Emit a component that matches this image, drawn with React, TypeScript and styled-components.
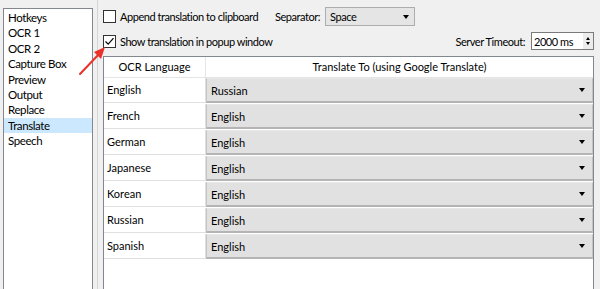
import styled, { createGlobalStyle } from 'styled-components';

const GlobalStyle = createGlobalStyle`
  html, body {
    margin: 0;
    padding: 0;
    background: #f0f0f0;
  }
  body {
    font-family: Lato, 'Noto Sans', sans-serif;
    font-size: 11px;
    color: #000;
  }
`;

const Window = styled.div`
  position: relative;
  display: flex;
  width: 600px;
  height: 289px;
  overflow: hidden;
  background: #f0f0f0;
`;

const SideList = styled.ul`
  list-style: none;
  margin: 8px 0 -20px 3px;
  padding: 1px 0 0;
  width: 88px;
  border: 1px solid #828790;
  background: #fff;
  letter-spacing: -0.4px;
`;

const SideItem = styled.li<{ $active?: boolean }>`
  height: 15.4px;
  line-height: 15.4px;
  padding-left: 4px;
  white-space: nowrap;
  font-size: 11.5px;
  background: ${(p) => (p.$active ? '#cce8ff' : 'transparent')};
`;

const Page = styled.div`
  display: flex;
  flex-direction: column;
  margin-left: 4px;
  padding-left: 5px;
  width: 491px;
  border-left: 1px solid #d4d4d4;
`;

const OptionRow = styled.div<{ $top: number; $height: number }>`
  display: flex;
  align-items: center;
  margin-top: ${(p) => p.$top}px;
  height: ${(p) => p.$height}px;
  letter-spacing: -0.45px;
`;

const CheckLabel = styled.label<{ $width?: number }>`
  display: flex;
  align-items: center;
  gap: 4px;
  white-space: nowrap;
  flex-shrink: 0;
  width: ${(p) => (p.$width ? `${p.$width}px` : 'auto')};
`;

const Box = styled.span`
  display: inline-flex;
  align-items: center;
  justify-content: center;
  flex-shrink: 0;
  width: 11px;
  height: 11px;
  border: 1px solid #333;
  background: #fff;
`;

const FieldLabel = styled.span<{ $push?: boolean }>`
  white-space: nowrap;
  margin-left: ${(p) => (p.$push ? 'auto' : '0')};
`;

const Combo = styled.div<{ $width: number }>`
  display: flex;
  align-items: center;
  justify-content: space-between;
  box-sizing: border-box;
  width: ${(p) => p.$width}px;
  height: 19px;
  margin-left: 5px;
  padding: 0 5px 0 4px;
  border: 1px solid #adadad;
  background: #e5e5e5;
`;

const Arrow = styled.span`
  width: 0;
  height: 0;
  border-left: 3.5px solid transparent;
  border-right: 3.5px solid transparent;
  border-top: 4px solid #000;
`;

const Spin = styled.div`
  display: flex;
  align-items: center;
  box-sizing: border-box;
  width: 63px;
  height: 18px;
  margin-left: 6px;
  padding-left: 2px;
  border: 1px solid #7a7a7a;
  background: #fff;
`;

const SpinText = styled.span`
  flex: 1;
`;

const SpinButtons = styled.div`
  display: flex;
  flex-direction: column;
  align-items: center;
  justify-content: center;
  gap: 2px;
  width: 10px;
  height: 100%;
  background: #ececec;
`;

const SmallTri = styled.span<{ $up?: boolean }>`
  width: 0;
  height: 0;
  border-left: 2.5px solid transparent;
  border-right: 2.5px solid transparent;
  ${(p) => (p.$up ? 'border-bottom: 3px solid #000;' : 'border-top: 3px solid #000;')}
`;

const Table = styled.div`
  margin-top: 6px;
  margin-bottom: -20px;
  flex: 1;
  border: 1px solid #828790;
  background: #fff;
`;

const Grid = styled.div`
  display: grid;
  grid-template-columns: 102px 1fr;
`;

const HeadCell = styled.div<{ $last?: boolean }>`
  height: 20px;
  line-height: 20px;
  text-align: center;
  border-bottom: 1px solid #e5e5e5;
  border-right: ${(p) => (p.$last ? 'none' : '1px solid #e5e5e5')};
`;

const LangCell = styled.div`
  height: 24px;
  line-height: 24px;
  padding-left: 3px;
  border-bottom: 1px solid #e0e0e0;
  border-right: 1px solid #e0e0e0;
`;

const CellCombo = styled.div`
  display: flex;
  align-items: center;
  justify-content: space-between;
  height: 22px;
  margin: 0 0 1px 0;
  padding: 0 7px 0 4px;
  border: 1px solid #c4c4c4;
  border-bottom: 2px solid #b4b4b4;
  border-top: 1px solid #e8e8e8;
  background: #e1e1e1;
`;

const Pointer = styled.svg`
  position: absolute;
  left: 76px;
  top: 44px;
`;

const sections = ['Hotkeys', 'OCR 1', 'OCR 2', 'Capture Box', 'Preview', 'Output', 'Replace', 'Translate', 'Speech'];

const rows: [string, string][] = [
  ['English', 'Russian'],
  ['French', 'English'],
  ['German', 'English'],
  ['Japanese', 'English'],
  ['Korean', 'English'],
  ['Russian', 'English'],
  ['Spanish', 'English'],
];

const Check = () => (
  <svg width="11" height="11" viewBox="0 0 11 11">
    <path d="M1.5 5.5 L4.2 8.2 L9.5 2.2" fill="none" stroke="#000" strokeWidth="1.2" />
  </svg>
);

export default function App() {
  return (
    <Window>
      <GlobalStyle />
      <SideList>
        {sections.map((s) => (
          <SideItem key={s} $active={s === 'Translate'}>
            {s}
          </SideItem>
        ))}
      </SideList>
      <Page>
        <OptionRow $top={7} $height={19}>
          <CheckLabel $width={172}>
            <Box />
            Append translation to clipboard
          </CheckLabel>
          <FieldLabel>Separator:</FieldLabel>
          <Combo $width={90}>
            Space
            <Arrow />
          </Combo>
        </OptionRow>
        <OptionRow $top={6} $height={18}>
          <CheckLabel>
            <Box>
              <Check />
            </Box>
            Show translation in popup window
          </CheckLabel>
          <FieldLabel $push>Server Timeout:</FieldLabel>
          <Spin>
            <SpinText>2000 ms</SpinText>
            <SpinButtons>
              <SmallTri $up />
              <SmallTri />
            </SpinButtons>
          </Spin>
        </OptionRow>
        <Table>
          <Grid>
            <HeadCell>OCR Language</HeadCell>
            <HeadCell $last>Translate To (using Google Translate)</HeadCell>
            {rows.map(([from, to]) => (
              <>
                <LangCell key={from}>{from}</LangCell>
                <CellCombo key={from + '-to'}>
                  {to}
                  <Arrow />
                </CellCombo>
              </>
            ))}
          </Grid>
        </Table>
      </Page>
      <Pointer width="34" height="34" viewBox="0 0 34 34">
        <line x1="4" y1="30" x2="24" y2="9" stroke="#e8322a" strokeWidth="2" strokeLinecap="round" />
        <polygon points="29,3 18,8 25,15" fill="#e8322a" />
      </Pointer>
    </Window>
  );
}
